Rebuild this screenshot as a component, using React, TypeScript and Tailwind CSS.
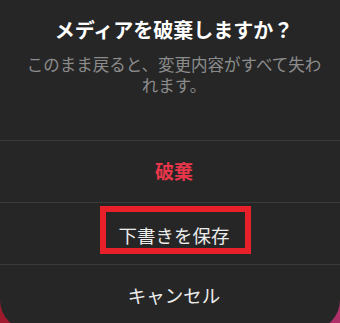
import React from "react";

export default function App() {
  const font = { fontFamily: '"Noto Sans CJK JP", "Noto Sans", sans-serif' };
  return (
    <div
      className="w-[340px] h-[323px] overflow-hidden bg-[linear-gradient(90deg,#a01a2e_0%,#7a1830_50%,#b0306a_100%)]"
      style={font}
    >
      <div className="h-[330px] w-[340px] rounded-b-[30px] bg-[#262626] pl-[8px] flex flex-col">
        <div className="pt-[16px] h-[140px] flex flex-col items-center">
          <div className="text-[20px] leading-[28px] font-bold text-white">
            メディアを破棄しますか？
          </div>
          <div className="mt-[10px] text-[16.5px] leading-[21px] text-[#8c8c8c] text-center">
            このまま戻ると、変更内容がすべて失わ
            <br />
            れます。
          </div>
        </div>
        <div className="h-px bg-[#3a3a3a] -ml-[8px]" />
        <div className="h-[61px] flex items-center justify-center text-[19px] font-bold text-[#e8364a]">
          破棄
        </div>
        <div className="h-px bg-[#3a3a3a] -ml-[8px]" />
        <div className="relative h-[61px] flex items-center justify-center text-[18.5px] text-[#ececec] pt-[4px]">
          下書きを保存
          <div className="absolute left-[92px] top-[3px] w-[151px] h-[48px] border-[6px] border-[#e8202a]" />
        </div>
        <div className="h-px bg-[#3a3a3a] -ml-[8px]" />
        <div className="h-[62px] flex items-center justify-center text-[18.5px] text-[#ececec]">
          キャンセル
        </div>
      </div>
    </div>
  );
}
